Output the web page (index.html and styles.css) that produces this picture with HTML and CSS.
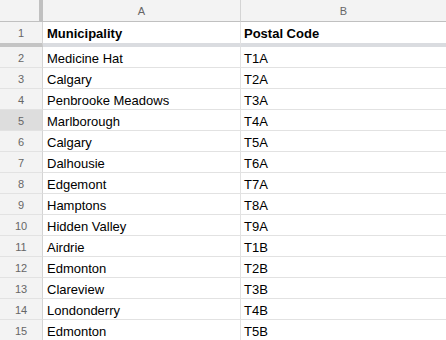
FILE: index.html
```html
<!DOCTYPE html>
<html>
<head>
<meta charset="utf-8">
<link rel="stylesheet" href="styles.css">
</head>
<body>
<div class="sheet">
  <div class="row col-head">
    <div class="corner"></div>
    <div class="ch ch-a">A</div>
    <div class="ch ch-b">B</div>
  </div>
  <div class="row frozen">
    <div class="rh">1</div>
    <div class="cell a bold">Municipality</div>
    <div class="cell b bold">Postal Code</div>
  </div>
  <div class="row"><div class="rh">2</div><div class="cell a">Medicine Hat</div><div class="cell b">T1A</div></div>
  <div class="row"><div class="rh">3</div><div class="cell a">Calgary</div><div class="cell b">T2A</div></div>
  <div class="row"><div class="rh">4</div><div class="cell a">Penbrooke Meadows</div><div class="cell b">T3A</div></div>
  <div class="row"><div class="rh hover">5</div><div class="cell a">Marlborough</div><div class="cell b">T4A</div></div>
  <div class="row"><div class="rh">6</div><div class="cell a">Calgary</div><div class="cell b">T5A</div></div>
  <div class="row"><div class="rh">7</div><div class="cell a">Dalhousie</div><div class="cell b">T6A</div></div>
  <div class="row"><div class="rh">8</div><div class="cell a">Edgemont</div><div class="cell b">T7A</div></div>
  <div class="row"><div class="rh">9</div><div class="cell a">Hamptons</div><div class="cell b">T8A</div></div>
  <div class="row"><div class="rh">10</div><div class="cell a">Hidden Valley</div><div class="cell b">T9A</div></div>
  <div class="row"><div class="rh">11</div><div class="cell a">Airdrie</div><div class="cell b">T1B</div></div>
  <div class="row"><div class="rh">12</div><div class="cell a">Edmonton</div><div class="cell b">T2B</div></div>
  <div class="row"><div class="rh">13</div><div class="cell a">Clareview</div><div class="cell b">T3B</div></div>
  <div class="row"><div class="rh">14</div><div class="cell a">Londonderry</div><div class="cell b">T4B</div></div>
  <div class="row"><div class="rh">15</div><div class="cell a">Edmonton</div><div class="cell b">T5B</div></div>
</div>
</body>
</html>
```

FILE: styles.css
```css
html, body {
  margin: 0;
  padding: 0;
  background: #fff;
}
.sheet {
  width: 446px;
  height: 340px;
  overflow: hidden;
  font-family: "Liberation Sans", Arial, sans-serif;
  font-size: 13px;
  color: #000;
}
.row {
  display: flex;
  height: 21px;
}
.col-head {
  height: 22px;
  background: #f3f3f3;
}
.corner {
  width: 39px;
  flex: none;
  border-right: 4px solid #c0c0c0;
  border-bottom: 1px solid #c0c0c0;
}
.ch {
  box-sizing: border-box;
  height: 22px;
  border-bottom: 1px solid #c0c0c0;
  color: #666;
  font-size: 11px;
  display: flex;
  align-items: center;
  justify-content: center;
  padding-top: 1px;
}
.ch-a {
  width: 198px;
  flex: none;
  border-right: 1px solid #d4d4d4;
}
.ch-b {
  flex: 1;
}
.rh {
  box-sizing: border-box;
  width: 43px;
  flex: none;
  background: #f3f3f3;
  border-right: 1px solid #d4d4d4;
  border-bottom: 1px solid #e2e2e2;
  color: #666;
  font-size: 11px;
  display: flex;
  align-items: center;
  justify-content: center;
  padding-top: 1px;
}
.rh.hover {
  background: #dddddd;
}
.cell {
  box-sizing: border-box;
  border-bottom: 1px solid #e2e2e2;
  padding: 2px 4px 0;
  display: flex;
  align-items: center;
  white-space: nowrap;
  overflow: hidden;
}
.cell.a {
  width: 198px;
  flex: none;
  border-right: 1px solid #e2e2e2;
}
.cell.b {
  flex: 1;
  padding-left: 3px;
}
.bold {
  font-weight: bold;
}
.frozen {
  height: 25px;
}
.frozen .rh {
  border-bottom: 4px solid #c4c4c4;
}
.frozen .cell {
  border-bottom: 4px solid #dadce0;
}
```
